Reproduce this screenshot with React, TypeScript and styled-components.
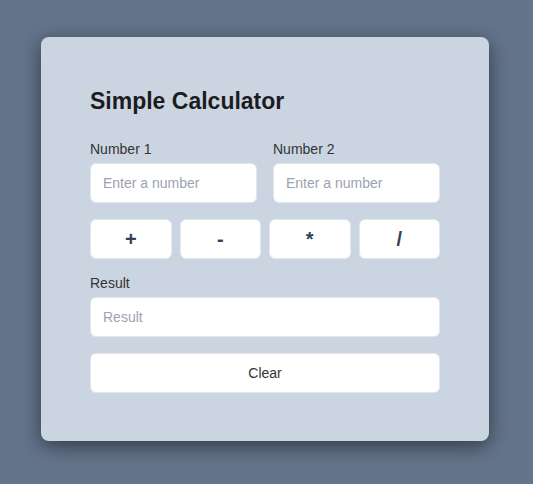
import React, { useState } from 'react';
import styled, { createGlobalStyle } from 'styled-components';

const GlobalStyle = createGlobalStyle`
  * { box-sizing: border-box; }
  html, body {
    margin: 0;
    padding: 0;
    background: #64748b;
    font-family: "Liberation Sans", Arial, sans-serif;
  }
`

const Page = styled.div`
  min-height: 484px;
  padding: 37px 0 0 41px;
`

const Card = styled.div`
  width: 448px;
  background: #cbd5e1;
  border-radius: 8px;
  padding: 48px 49px;
  box-shadow: 0 5px 20px rgba(0, 0, 0, 0.5);
  display: flex;
  flex-direction: column;
`

const Title = styled.h1`
  margin: 0 0 22px;
  font-size: 23px;
  line-height: 32px;
  font-weight: 700;
  color: #1c1c1e;
`

const InputRow = styled.div`
  display: grid;
  grid-template-columns: 1fr 1fr;
  gap: 16px;
`

const Field = styled.div<{ $top?: number }>`
  display: flex;
  flex-direction: column;
  margin-top: ${p => p.$top ?? 0}px;
`

const Label = styled.label`
  font-size: 14px;
  line-height: 20px;
  color: #333;
  margin-bottom: 4px;
`

const Input = styled.input`
  height: 40px;
  width: 100%;
  border: 1px solid #e2e8f0;
  border-radius: 6px;
  background: #fff;
  padding: 0 12px;
  font-family: inherit;
  font-size: 14px;
  color: #333;
  outline: none;

  &::placeholder {
    color: #9ca3af;
  }
`

const OpRow = styled.div`
  display: grid;
  grid-template-columns: repeat(4, 1fr);
  gap: 8px;
  margin-top: 16px;
`

const OpButton = styled.button`
  height: 40px;
  border: 1px solid #e2e8f0;
  border-radius: 6px;
  background: #fff;
  font-family: inherit;
  font-size: 20px;
  font-weight: 700;
  color: #334155;
  cursor: pointer;
`

const ClearButton = styled.button`
  height: 40px;
  margin-top: 16px;
  border: 1px solid #e2e8f0;
  border-radius: 6px;
  background: #fff;
  font-family: inherit;
  font-size: 14px;
  color: #333;
  cursor: pointer;
`

export default function App() {
  const [a, setA] = useState('')
  const [b, setB] = useState('')
  const [result, setResult] = useState('')

  function calc(op: string) {
    const x = parseFloat(a)
    const y = parseFloat(b)
    if (isNaN(x) || isNaN(y)) return
    let r = 0
    if (op === '+') r = x + y
    if (op === '-') r = x - y
    if (op === '*') r = x * y
    if (op === '/') r = x / y
    setResult(String(r))
  }

  function clear() {
    setA('')
    setB('')
    setResult('')
  }

  return (
    <Page>
      <GlobalStyle />
      <Card>
        <Title>Simple Calculator</Title>
        <InputRow>
          <Field>
            <Label htmlFor="num1">Number 1</Label>
            <Input id="num1" type="number" placeholder="Enter a number" value={a} onChange={e => setA(e.target.value)} />
          </Field>
          <Field>
            <Label htmlFor="num2">Number 2</Label>
            <Input id="num2" type="number" placeholder="Enter a number" value={b} onChange={e => setB(e.target.value)} />
          </Field>
        </InputRow>
        <OpRow>
          {['+', '-', '*', '/'].map(op => (
            <OpButton key={op} onClick={() => calc(op)}>{op}</OpButton>
          ))}
        </OpRow>
        <Field $top={14}>
          <Label htmlFor="result">Result</Label>
          <Input id="result" placeholder="Result" value={result} readOnly />
        </Field>
        <ClearButton onClick={() => clear()}>Clear</ClearButton>
      </Card>
    </Page>
  )
}
